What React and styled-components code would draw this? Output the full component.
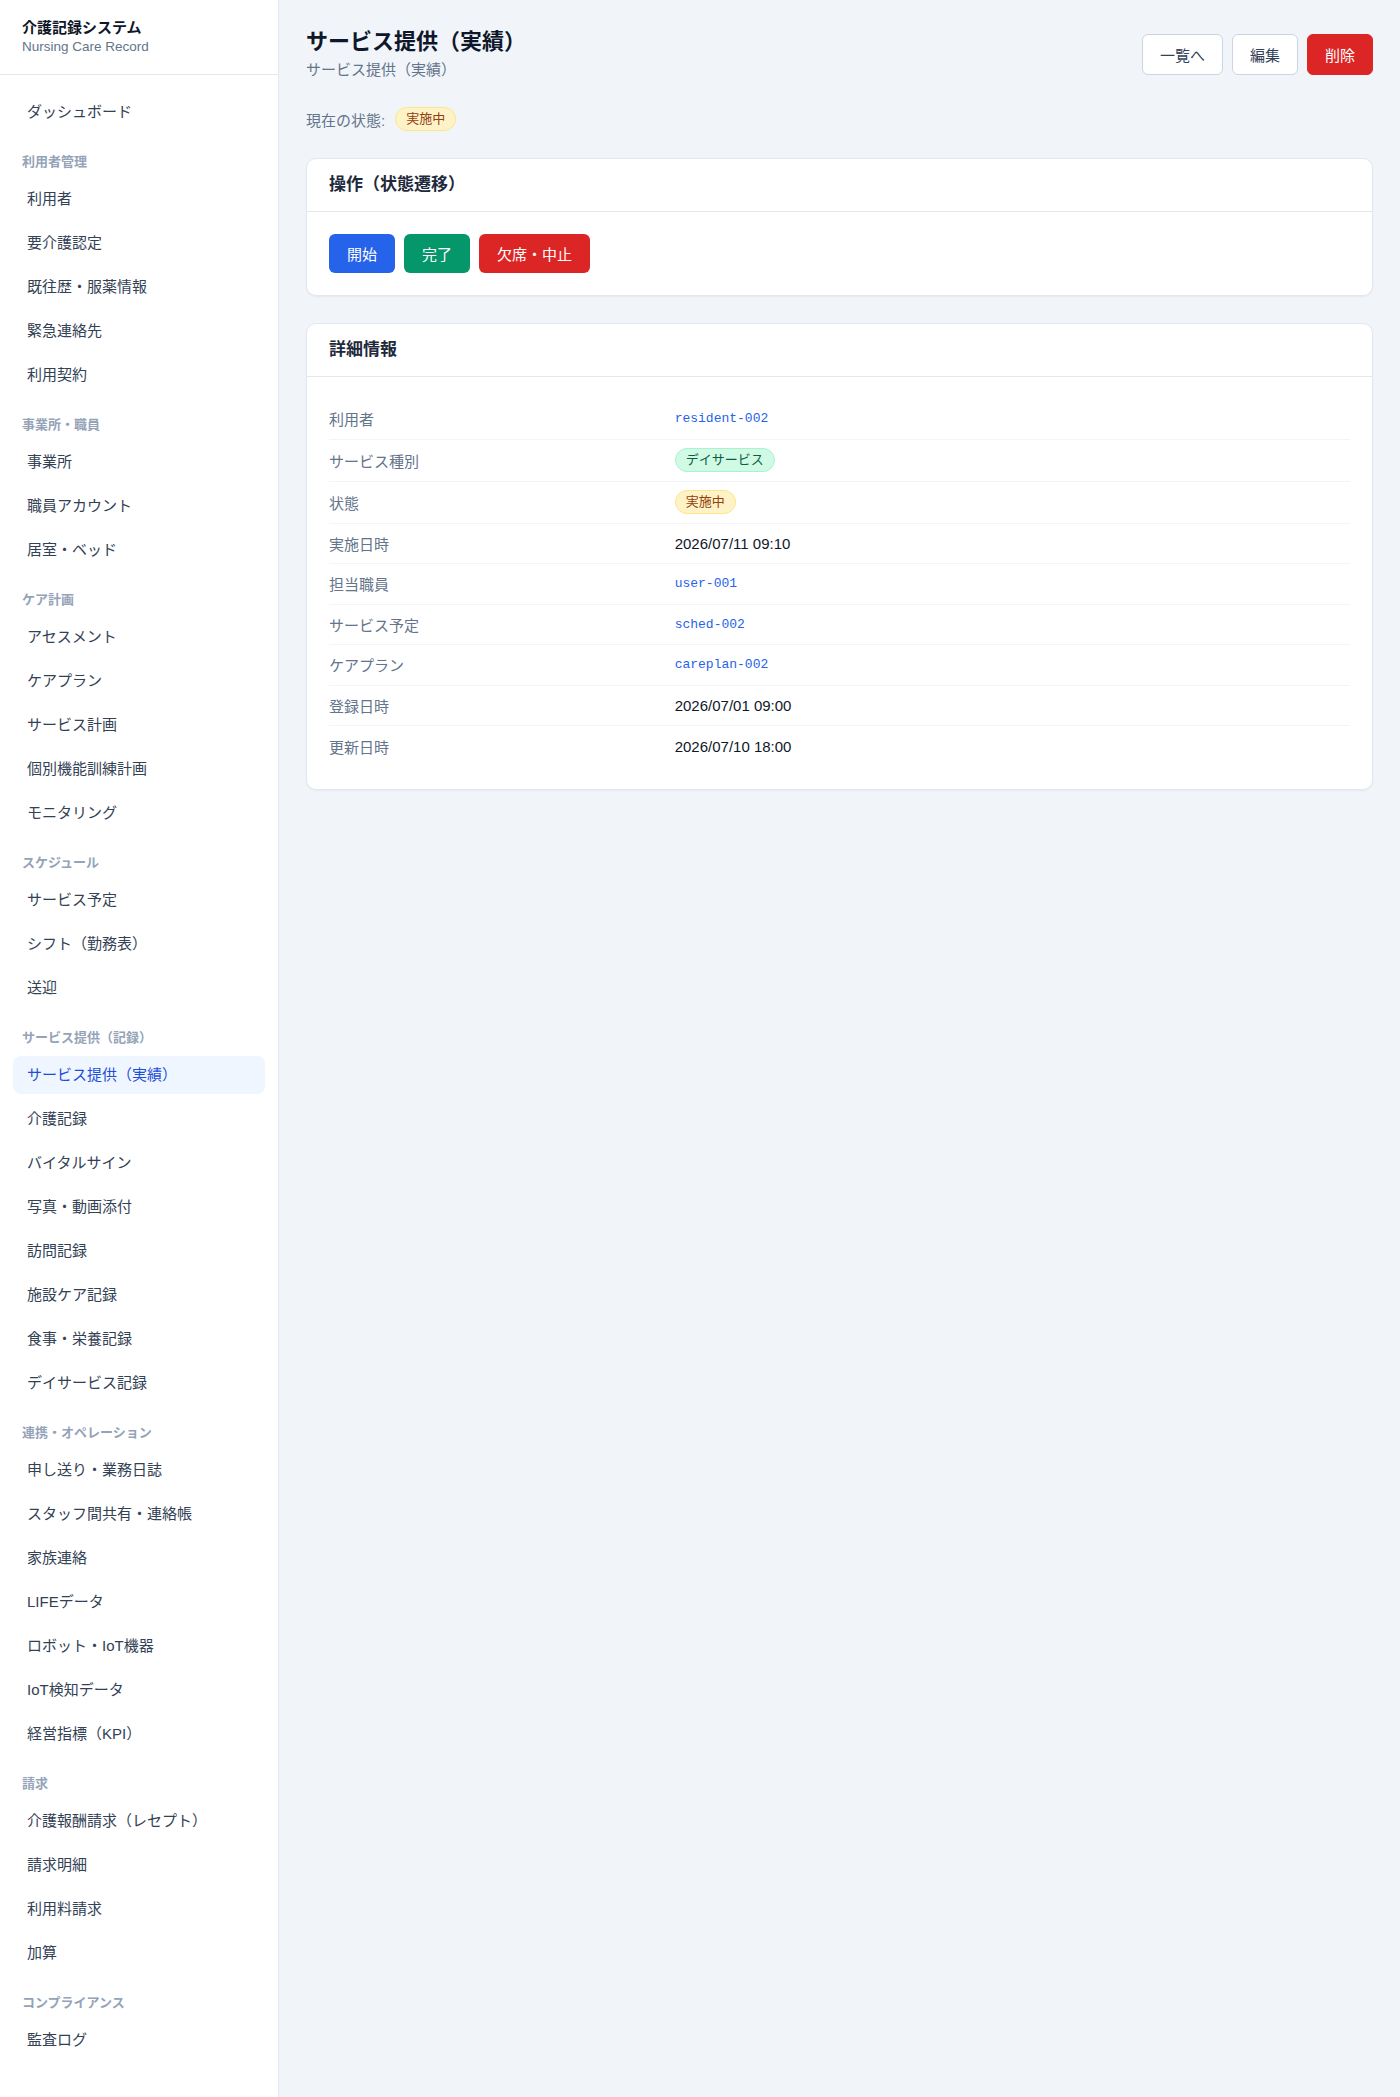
import React from 'react'
import { styled, createGlobalStyle } from 'styled-components'

const GlobalStyle = createGlobalStyle`
  * { box-sizing: border-box; }
  body {
    margin: 0;
    font-family: "Liberation Sans", "Noto Sans CJK JP", sans-serif;
    color: #0f172a;
    background: #f1f5f9;
  }
`

const Layout = styled.div`
  display: flex;
  min-height: 100vh;
`

const Sidebar = styled.aside`
  width: 279px;
  flex-shrink: 0;
  background: #fff;
  border-right: 1px solid #e2e8f0;
`

const Brand = styled.div`
  padding: 18px 22px;
  border-bottom: 1px solid #e2e8f0;
`

const BrandTitle = styled.div`
  font-size: 15px;
  font-weight: 700;
  line-height: 20px;
  color: #0f172a;
`

const BrandSub = styled.div`
  font-size: 13.5px;
  line-height: 18px;
  color: #64748b;
`

const Nav = styled.nav`
  display: flex;
  flex-direction: column;
  padding: 18px 13px 24px;
`

const SectionLabel = styled.div`
  font-size: 13px;
  font-weight: 700;
  line-height: 18px;
  color: #94a3b8;
  padding-left: 9px;
  margin: 16px 0 9px;
`

const NavItem = styled.a`
  display: block;
  height: 38px;
  line-height: 38px;
  padding: 0 14px;
  margin-bottom: 6px;
  border-radius: 8px;
  font-size: 15px;
  color: ${p => (p.$active ? '#1d4ed8' : '#334155')};
  background: ${p => (p.$active ? '#eff6ff' : 'transparent')};
  text-decoration: none;
  white-space: nowrap;
`

const Main = styled.main`
  flex: 1;
  padding: 27px;
`

const PageHeader = styled.div`
  display: flex;
  justify-content: space-between;
  align-items: center;
  margin-bottom: 26px;
`

const Title = styled.h1`
  margin: 0;
  font-size: 22px;
  line-height: 30px;
  font-weight: 700;
  color: #0f172a;
`

const Subtitle = styled.div`
  margin-top: 2px;
  font-size: 15px;
  line-height: 22px;
  color: #64748b;
`

const Actions = styled.div`
  display: flex;
  gap: 9px;
`

const Button = styled.button`
  height: ${p => (p.$plain ? '39px' : '41px')};
  padding: 0 ${p => (p.$plain ? '18px' : '17px')};
  border-radius: 6px;
  font-family: inherit;
  font-size: 15px;
  border: ${p => (p.$plain ? 'none' : `1px solid ${p.$border || p.$bg}`)};
  background: ${p => p.$bg};
  color: ${p => p.$color};
  cursor: pointer;
`

const StatusRow = styled.div`
  display: flex;
  align-items: center;
  gap: 10px;
  font-size: 15px;
  color: #64748b;
  margin-bottom: 27px;
`

const Badge = styled.span`
  display: inline-block;
  height: 24px;
  line-height: 22px;
  padding: 0 10px;
  border-radius: 999px;
  font-size: 13px;
  border: 1px solid ${p => p.$border};
  background: ${p => p.$bg};
  color: ${p => p.$color};
`

const Card = styled.section`
  background: #fff;
  border: 1px solid #e2e8f0;
  border-radius: 10px;
  box-shadow: 0 1px 2px rgba(15, 23, 42, 0.05);
  margin-bottom: 27px;
`

const CardHeader = styled.div`
  padding: 14px 22px;
  border-bottom: 1px solid #e2e8f0;
`

const CardTitle = styled.h2`
  margin: 0;
  font-size: 17px;
  line-height: 24px;
  font-weight: 700;
  color: #1e293b;
`

const CardBody = styled.div`
  padding: 22px;
`

const ButtonRow = styled.div`
  display: flex;
  gap: 9px;
`

const Row = styled.div`
  display: grid;
  grid-template-columns: 1fr 2fr;
  column-gap: 8px;
  align-items: center;
  height: ${p => (p.$tall ? '42px' : '40.5px')};
  border-bottom: 1px solid #f1f5f9;
  &:last-child { border-bottom: none; }
`

const Label = styled.div`
  display: flex;
  align-items: center;
  height: 22px;
  font-size: 15px;
  color: #64748b;
`

const Value = styled.div`
  display: flex;
  align-items: center;
  height: 22px;
  font-size: 15px;
  color: #0f172a;
`

const Code = styled.span`
  font-family: "Liberation Mono", monospace;
  font-size: 13px;
  color: #2563eb;
`

const sections = [
  { items: ['ダッシュボード'] },
  { label: '利用者管理', items: ['利用者', '要介護認定', '既往歴・服薬情報', '緊急連絡先', '利用契約'] },
  { label: '事業所・職員', items: ['事業所', '職員アカウント', '居室・ベッド'] },
  { label: 'ケア計画', items: ['アセスメント', 'ケアプラン', 'サービス計画', '個別機能訓練計画', 'モニタリング'] },
  { label: 'スケジュール', items: ['サービス予定', 'シフト（勤務表）', '送迎'] },
  {
    label: 'サービス提供（記録）',
    items: ['サービス提供（実績）', '介護記録', 'バイタルサイン', '写真・動画添付', '訪問記録', '施設ケア記録', '食事・栄養記録', 'デイサービス記録'],
  },
  {
    label: '連携・オペレーション',
    items: ['申し送り・業務日誌', 'スタッフ間共有・連絡帳', '家族連絡', 'LIFEデータ', 'ロボット・IoT機器', 'IoT検知データ', '経営指標（KPI）'],
  },
  { label: '請求', items: ['介護報酬請求（レセプト）', '請求明細', '利用料請求', '加算'] },
  { label: 'コンプライアンス', items: ['監査ログ'] },
]

const status = { bg: '#fef3c7', border: '#fde68a', color: '#92400e' }

const details = [
  ['利用者', <Code>resident-002</Code>],
  ['サービス種別', <Badge $bg="#d1fae5" $border="#a7f3d0" $color="#065f46">デイサービス</Badge>, true],
  ['状態', <Badge $bg={status.bg} $border={status.border} $color={status.color}>実施中</Badge>, true],
  ['実施日時', '2026/07/11 09:10'],
  ['担当職員', <Code>user-001</Code>],
  ['サービス予定', <Code>sched-002</Code>],
  ['ケアプラン', <Code>careplan-002</Code>],
  ['登録日時', '2026/07/01 09:00'],
  ['更新日時', '2026/07/10 18:00'],
]

export default function App() {
  return (
    <Layout>
      <GlobalStyle />
      <Sidebar>
        <Brand>
          <BrandTitle>介護記録システム</BrandTitle>
          <BrandSub>Nursing Care Record</BrandSub>
        </Brand>
        <Nav>
          {sections.map((s, i) => (
            <React.Fragment key={i}>
              {s.label && <SectionLabel>{s.label}</SectionLabel>}
              {s.items.map(item => (
                <NavItem key={item} href="#" $active={item === 'サービス提供（実績）'}>
                  {item}
                </NavItem>
              ))}
            </React.Fragment>
          ))}
        </Nav>
      </Sidebar>

      <Main>
        <PageHeader>
          <div>
            <Title>サービス提供（実績）</Title>
            <Subtitle>サービス提供（実績）</Subtitle>
          </div>
          <Actions>
            <Button $bg="#fff" $border="#cbd5e1" $color="#334155">一覧へ</Button>
            <Button $bg="#fff" $border="#cbd5e1" $color="#334155">編集</Button>
            <Button $bg="#dc2626" $color="#fff">削除</Button>
          </Actions>
        </PageHeader>

        <StatusRow>
          現在の状態:
          <Badge $bg={status.bg} $border={status.border} $color={status.color}>実施中</Badge>
        </StatusRow>

        <Card>
          <CardHeader>
            <CardTitle>操作（状態遷移）</CardTitle>
          </CardHeader>
          <CardBody>
            <ButtonRow>
              <Button $plain $bg="#2563eb" $color="#fff">開始</Button>
              <Button $plain $bg="#059669" $color="#fff">完了</Button>
              <Button $plain $bg="#dc2626" $color="#fff">欠席・中止</Button>
            </ButtonRow>
          </CardBody>
        </Card>

        <Card>
          <CardHeader>
            <CardTitle>詳細情報</CardTitle>
          </CardHeader>
          <CardBody>
            {details.map(([label, value, tall]) => (
              <Row key={label} $tall={tall}>
                <Label>{label}</Label>
                <Value>{value}</Value>
              </Row>
            ))}
          </CardBody>
        </Card>
      </Main>
    </Layout>
  )
}
